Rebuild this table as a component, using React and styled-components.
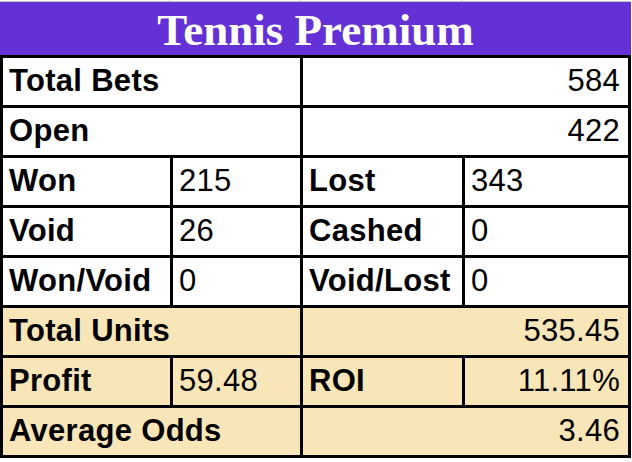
import styled, { createGlobalStyle } from "styled-components";

const GlobalStyle = createGlobalStyle`
  body {
    margin: 0;
    background: #ffffff;
    font-family: "Liberation Sans", Arial, sans-serif;
  }
`;

const Sheet = styled.div`
  width: 631px;
  display: flex;
  flex-direction: column;
`;

const GridStrip = styled.div`
  display: grid;
  grid-template-columns: 170px 130px 162px 169px;
  height: 1px;
  border-bottom: 1px solid #c4c4c4;
`;

const GridTick = styled.div`
  border-right: 1px solid #c4c4c4;
`;

const Header = styled.div`
  height: 53px;
  background: #6431d7;
  color: #ffffff;
  font-family: "Liberation Serif", "Times New Roman", serif;
  font-weight: 700;
  font-size: 45px;
  line-height: 50px;
  display: flex;
  align-items: center;
  justify-content: center;
  padding-top: 3px;
  box-sizing: border-box;
`;

const Table = styled.div`
  display: grid;
  grid-template-columns: 167px 127px 159px 163px;
  grid-auto-rows: 47px;
  gap: 3px;
  padding: 3px;
  background: #000000;
`;

const Cell = styled.div`
  grid-column: span ${({ $span }) => $span || 1};
  background: ${({ $tone }) => ($tone === "beige" ? "#f8e6b8" : "#ffffff")};
  color: #000000;
  font-size: 31px;
  letter-spacing: 0.3px;
  font-weight: ${({ $bold }) => ($bold ? 700 : 400)};
  line-height: 34px;
  display: flex;
  align-items: center;
  justify-content: ${({ $right }) => ($right ? "flex-end" : "flex-start")};
  padding: 0 8px 2px 6px;
  white-space: nowrap;
  overflow: hidden;
`;

const rows = [
  { type: "wide", label: "Total Bets", value: "584" },
  { type: "wide", label: "Open", value: "422" },
  { type: "pair", cells: ["Won", "215", "Lost", "343"] },
  { type: "pair", cells: ["Void", "26", "Cashed", "0"] },
  { type: "pair", cells: ["Won/Void", "0", "Void/Lost", "0"] },
  { type: "wide", label: "Total Units", value: "535.45", tone: "beige" },
  { type: "pair", cells: ["Profit", "59.48", "ROI", "11.11%"], tone: "beige", rightValues: [false, true] },
  { type: "wide", label: "Average Odds", value: "3.46", tone: "beige" },
];

const App = () => {
  return (
    <>
      <GlobalStyle />
      <Sheet>
        <GridStrip>
          <GridTick />
          <GridTick />
          <GridTick />
          <div />
        </GridStrip>
        <Header>Tennis Premium</Header>
        <Table>
          {rows.map((row, i) =>
            row.type === "wide" ? (
              [
                <Cell key={i + "l"} $span={2} $bold $tone={row.tone}>
                  {row.label}
                </Cell>,
                <Cell key={i + "v"} $span={2} $right $tone={row.tone}>
                  {row.value}
                </Cell>,
              ]
            ) : (
              row.cells.map((text, j) => (
                <Cell
                  key={i + "-" + j}
                  $bold={j % 2 === 0}
                  $tone={row.tone}
                  $right={j % 2 === 1 && row.rightValues && row.rightValues[(j - 1) / 2]}
                >
                  {text}
                </Cell>
              ))
            )
          )}
        </Table>
      </Sheet>
    </>
  );
};

export default App;
